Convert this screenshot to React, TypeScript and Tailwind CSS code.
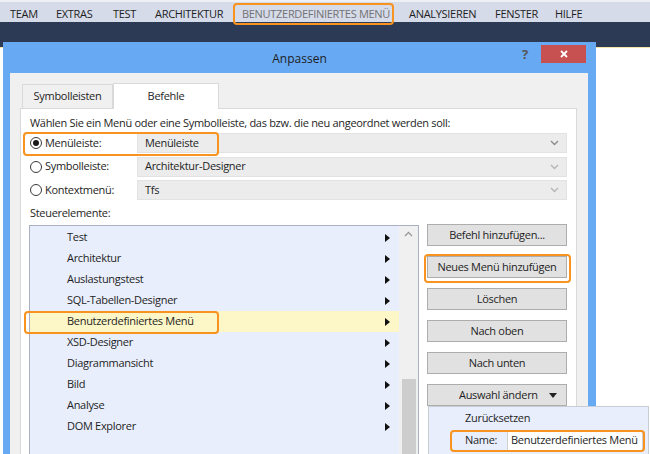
import React from "react";

const menuItems = [
  { t: "TEAM", dim: false, w: "w-[46px]" },
  { t: "EXTRAS", dim: false, w: "w-[57px]" },
  { t: "TEST", dim: false, w: "w-[42px]" },
  { t: "ARCHITEKTUR", dim: false, w: "w-[87px]" },
  { t: "BENUTZERDEFINIERTES MENÜ", dim: true, w: "w-[167px]" },
  { t: "ANALYSIEREN", dim: false, w: "w-[86px]" },
  { t: "FENSTER", dim: false, w: "w-[60px]" },
  { t: "HILFE", dim: false, w: "w-[50px]" },
];

const listItems = [
  "Test",
  "Architektur",
  "Auslastungstest",
  "SQL-Tabellen-Designer",
  "Benutzerdefiniertes Menü",
  "XSD-Designer",
  "Diagrammansicht",
  "Bild",
  "Analyse",
  "DOM Explorer",
];

function Chevron({ light }: { light?: boolean }) {
  return (
    <svg width="9" height="6" viewBox="0 0 9 6" className="shrink-0">
      <path d="M1 1 L4.5 4.5 L8 1" fill="none" stroke={light ? "#b4b4b4" : "#8a8a8a"} strokeWidth="1.3" />
    </svg>
  );
}

function Radio({ checked }: { checked?: boolean }) {
  return (
    <div className="w-[12px] h-[12px] rounded-full border border-[#3a3a3a] bg-white flex items-center justify-center shrink-0">
      {checked && <div className="w-[6px] h-[6px] rounded-full bg-[#1a1a1a]" />}
    </div>
  );
}

function SelectRow({ label, value, checked, light }: { label: string; value: string; checked?: boolean; light?: boolean }) {
  return (
    <div className="flex items-center h-[20px]">
      <div className="w-[14px] flex justify-start">
        <Radio checked={checked} />
      </div>
      <div className="w-[93px] pl-[1px] text-[11px] tracking-[-0.3px] text-[#1e1e1e]">{label}</div>
      <div className="flex-1 h-[20px] bg-[#ececec] border border-[#e2e2e2] flex items-center justify-between pl-[7px] pr-[7px] text-[11px] tracking-[-0.3px] text-[#1e1e1e]">
        <span>{value}</span>
        <Chevron light={light} />
      </div>
    </div>
  );
}

function Arrow() {
  return (
    <svg width="5" height="8" viewBox="0 0 5 8">
      <path d="M0 0 L5 4 L0 8 Z" fill="#111" />
    </svg>
  );
}

function Btn({ children }: { children: React.ReactNode }) {
  return (
    <div className="h-[22px] bg-[#e1e1e1] border border-[#adadad] flex items-center justify-center text-[11px] tracking-[-0.3px] text-[#1e1e1e]">
      {children}
    </div>
  );
}

export default function App() {
  return (
    <div className="relative w-[650px] h-[454px] overflow-hidden bg-white font-['Open_Sans',sans-serif]">
      {/* IDE menu bar */}
      <div className="h-[22px] bg-[#d6dbe9] border-t-[2px] border-[#eef0f6] flex items-center pt-[4px] pl-[10px] text-[11px] tracking-[-0.3px]">
        {menuItems.map((m) => (
          <span key={m.t} className={`${m.w} shrink-0 whitespace-nowrap ${m.dim ? "text-[#727272]" : "text-[#1e1e1e]"}`}>
            {m.t}
          </span>
        ))}
      </div>
      {/* dark toolbar band */}
      <div className="h-[26px] bg-[#2d3a55] border-b border-[#f3e6a8]" />
      <div className="h-[406px] bg-white" />

      {/* Dialog window */}
      <div className="absolute left-[3px] top-[42px] w-[593px] h-[430px] bg-[#67a9f3] flex flex-col">
        <div className="h-[31px] shrink-0 relative flex items-center justify-center pt-[3px]">
          <span className="text-[12px] text-[#1e1e1e]">Anpassen</span>
          <span className="absolute left-[519px] top-[3px] text-[13px] font-bold text-[#555]">?</span>
          <div className="absolute left-[538px] top-[3px] w-[45px] h-[18px] bg-[#c75050] flex items-center justify-center">
            <svg width="8" height="8" viewBox="0 0 8 8">
              <path d="M1 1 L7 7 M7 1 L1 7" stroke="#fff" strokeWidth="1.8" />
            </svg>
          </div>
        </div>
        <div className="ml-[7px] mr-[8px] flex-1 min-h-0 bg-[#f0f0f0] pt-[9px] pl-[10px] pr-[11px]">
          {/* tabs */}
          <div className="flex items-end pl-[2px] h-[26px]">
            <div className="w-[91px] h-[24px] bg-[#f0f0f0] border border-[#d9d9d9] border-b-0 flex items-center justify-center text-[11px] tracking-[-0.3px] text-[#1e1e1e]">
              Symbolleisten
            </div>
            <div className="w-[106px] h-[26px] bg-white border border-[#d9d9d9] border-b-0 -mb-px relative z-10 flex items-center justify-center text-[11px] tracking-[-0.3px] text-[#1e1e1e]">
              Befehle
            </div>
          </div>
          {/* panel */}
          <div className="h-[400px] bg-white border border-[#d9d9d9] pl-[9px] pr-[9px] pt-[5px]">
            <div className="text-[11px] text-[#1e1e1e] h-[18px] leading-[18px] tracking-[-0.3px]">
              Wählen Sie ein Menü oder eine Symbolleiste, das bzw. die neu angeordnet werden soll:
            </div>
            <div className="mt-[1px] flex flex-col gap-[3.5px]">
              <SelectRow label="Menüleiste:" value="Menüleiste" checked />
              <SelectRow label="Symbolleiste:" value="Architektur-Designer" light />
              <SelectRow label="Kontextmenü:" value="Tfs" light />
            </div>
            <div className="mt-[4px] h-[18px] leading-[18px] text-[11px] text-[#1e1e1e] tracking-[-0.3px]">Steuerelemente:</div>
            <div className="mt-[3px] flex">
              {/* list */}
              <div className="w-[390px] h-[240px] border border-[#a9b0bf] border-b-0 bg-[#e9eefc] flex -ml-[1px]">
                <div className="flex-1 pt-[1px]">
                  {listItems.map((it, i) => (
                    <div
                      key={it}
                      className={`h-[21px] flex items-center justify-between pl-[37px] pr-[9px] text-[11px] tracking-[-0.3px] text-[#1e1e1e] ${i === 4 ? "bg-[#fdf6c6]" : ""}`}
                    >
                      <span>{it}</span>
                      <Arrow />
                    </div>
                  ))}
                </div>
                <div className="w-[19px] bg-[#f0f0f0] flex flex-col items-center">
                  <svg width="9" height="6" viewBox="0 0 9 6" className="mt-[5px]">
                    <path d="M1 5 L4.5 1.5 L8 5" fill="none" stroke="#9a9a9a" strokeWidth="1.3" />
                  </svg>
                  <div className="mt-[142px] w-[14px] flex-1 bg-[#cdcdcd]" />
                </div>
              </div>
              {/* buttons */}
              <div className="ml-[8px] w-[140px] flex flex-col gap-[10px] -mt-[1px]">
                <Btn>Befehl hinzufügen...</Btn>
                <Btn>Neues Menü hinzufügen</Btn>
                <Btn>Löschen</Btn>
                <Btn>Nach oben</Btn>
                <Btn>Nach unten</Btn>
                <div className="h-[22px] bg-[#e1e1e1] border border-[#adadad] flex items-center text-[11px] tracking-[-0.3px] text-[#1e1e1e] pl-[31px] pr-[9px] justify-between">
                  <span>Auswahl ändern</span>
                  <svg width="8" height="5" viewBox="0 0 8 5">
                    <path d="M0 0 L8 0 L4 5 Z" fill="#222" />
                  </svg>
                </div>
              </div>
            </div>
          </div>
        </div>
      </div>

      {/* dropdown submenu */}
      <div className="absolute left-[428px] top-[406px] w-[221px] h-[50px] bg-[#e9eefc] border border-[#c9cdd6] text-[11px] tracking-[-0.3px] text-[#1e1e1e]">
        <div className="h-[22px] flex items-center pl-[36px]">Zurücksetzen</div>
        <div className="flex items-center h-[22px]">
          <span className="w-[78px] pl-[36px]">Name:</span>
          <div className="w-[136px] h-[21px] bg-white border border-[#d0d0d0] flex items-center pl-[3px] whitespace-nowrap overflow-hidden">
            Benutzerdefiniertes Menü
          </div>
        </div>
      </div>

      {/* orange annotation boxes */}
      <div className="absolute left-[233px] top-[3px] w-[161px] h-[22px] border-2 border-[#f7931e] rounded-[4px]" />
      <div className="absolute left-[23px] top-[132px] w-[196px] h-[24px] border-2 border-[#f7931e] rounded-[4px]" />
      <div className="absolute left-[24px] top-[311px] w-[195px] h-[23px] border-2 border-[#f7931e] rounded-[4px]" />
      <div className="absolute left-[424px] top-[254px] w-[147px] h-[29px] border-2 border-[#f7931e] rounded-[4px]" />
      <div className="absolute left-[450px] top-[430px] w-[195px] h-[22px] border-2 border-[#f7931e] rounded-[4px]" />
    </div>
  );
}
